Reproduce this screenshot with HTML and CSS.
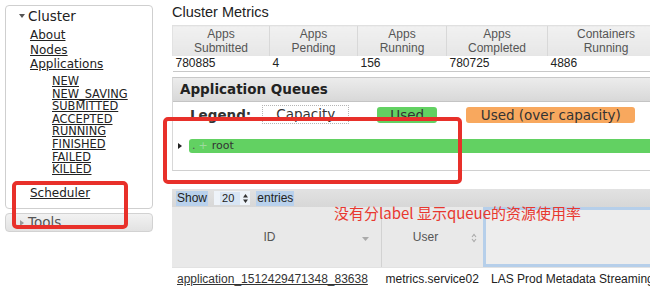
FILE: index.html
```html
<!DOCTYPE html>
<html>
<head>
<meta charset="utf-8">
<link rel="stylesheet" href="styles.css">
</head>
<body>
<div class="page">
  <aside class="nav">
    <div class="panel">
      <div class="panel-head"><span class="tri-down"></span>Cluster</div>
      <ul class="links">
        <li><a href="#">About</a></li>
        <li><a href="#">Nodes</a></li>
        <li><a href="#">Applications</a>
          <ul class="sub">
            <li><a href="#">NEW</a></li>
            <li><a href="#">NEW_SAVING</a></li>
            <li><a href="#">SUBMITTED</a></li>
            <li><a href="#">ACCEPTED</a></li>
            <li><a href="#">RUNNING</a></li>
            <li><a href="#">FINISHED</a></li>
            <li><a href="#">FAILED</a></li>
            <li><a href="#">KILLED</a></li>
          </ul>
        </li>
        <li class="sched"><a href="#">Scheduler</a></li>
      </ul>
    </div>
    <div class="panel-closed"><span class="tri-right"></span>Tools</div>
  </aside>

  <main class="content">
    <h3 class="title">Cluster Metrics</h3>
    <table class="metrics">
      <tr>
        <th class="c1">Apps<br>Submitted</th>
        <th class="c2">Apps<br>Pending</th>
        <th class="c3">Apps<br>Running</th>
        <th class="c4">Apps<br>Completed</th>
        <th class="c5">Containers<br>Running</th>
      </tr>
      <tr>
        <td>780885</td>
        <td>4</td>
        <td>156</td>
        <td>780725</td>
        <td>4886</td>
      </tr>
    </table>

    <section class="queues">
      <div class="q-head">Application Queues</div>
      <div class="legend">
        <span class="legend-label">Legend:</span>
        <span class="lg lg-cap">Capacity</span>
        <span class="lg lg-used">Used</span>
        <span class="lg lg-over">Used (over capacity)</span>
      </div>
      <div class="q-tree">
        <span class="tree-arrow"></span>
        <div class="q-bar"><span class="q-dot">.</span><span class="q-plus">+</span><span class="q-name">root</span></div>
      </div>
    </section>

    <div class="show-bar">
      <span class="sel">Show</span>
      <span class="select"><span class="sel-num">20</span><svg class="updown" width="5" height="9" viewBox="0 0 5 9"><path d="M2.5 0 L5 3.5 L0 3.5 Z M2.5 9 L5 5.5 L0 5.5 Z" fill="#333"/></svg></span>
      <span class="sel">entries</span>
    </div>

    <table class="apps">
      <tr>
        <th class="a1"><span class="th-id">ID</span><svg class="sort-down" width="7" height="4" viewBox="0 0 7 4"><path d="M0 0 L7 0 L3.5 4 Z" fill="#aaa"/></svg></th>
        <th class="a2"><span class="th-user">User</span><svg class="sort-both" width="6" height="10" viewBox="0 0 6 10"><path d="M1 4 L3 1.5 L5 4 M1 6 L3 8.5 L5 6" fill="none" stroke="#aaa" stroke-width="1.1"/></svg></th>
        <th class="a3"></th>
      </tr>
      <tr>
        <td class="app-id"><a href="#">application_1512429471348_83638</a></td>
        <td class="app-user">metrics.service02</td>
        <td class="app-name">LAS Prod Metadata Streaming</td>
      </tr>
    </table>
  </main>
</div>

<div class="mark mark-queue"></div>
<div class="mark mark-sched"></div>
<div class="note">没有分label 显示queue的资源使用率</div>
</body>
</html>
```

FILE: styles.css
```css
html, body {
  margin: 0;
  padding: 0;
}
body {
  width: 650px;
  height: 293px;
  overflow: hidden;
  position: relative;
  background: #fff;
  color: #222;
  font-family: "Liberation Sans", Arial, sans-serif;
}
.page {
  display: flex;
  align-items: flex-start;
}

/* ---------- left navigation ---------- */
.nav {
  flex: none;
  width: 148px;
  margin: 5px 0 0 5px;
  font-family: "DejaVu Sans", Verdana, sans-serif;
}
.panel {
  box-sizing: border-box;
  height: 204px;
  border: 1px solid #cfcfcf;
  border-radius: 4px;
  background: #fff;
}
.panel-head {
  height: 20px;
  line-height: 20px;
  padding-left: 13px;
  font-size: 13.5px;
  color: #222;
  display: flex;
  align-items: center;
}
.tri-down {
  width: 0;
  height: 0;
  border-left: 3px solid transparent;
  border-right: 3px solid transparent;
  border-top: 4px solid #555;
  margin-right: 3px;
}
.links {
  list-style: none;
  margin: 2px 0 0 0;
  padding: 0 0 0 24px;
  font-size: 12px;
  line-height: 14.5px;
}
.links a {
  color: #222;
  text-decoration: underline;
}
.sub {
  list-style: none;
  margin: 3.4px 0 0 0;
  padding: 0 0 0 22px;
  font-size: 11.4px;
  line-height: 12.64px;
}
.sched {
  margin-top: 10px;
}
.panel-closed {
  box-sizing: border-box;
  margin-top: 4px;
  height: 19px;
  border: 1px solid #d2d2d2;
  border-radius: 4px;
  background: linear-gradient(#f2f2f2, #e2e2e2);
  padding-left: 14px;
  font-size: 13.5px;
  line-height: 19px;
  color: #555;
  display: flex;
  align-items: center;
  overflow: hidden;
}
.tri-right {
  width: 0;
  height: 0;
  border-top: 3px solid transparent;
  border-bottom: 3px solid transparent;
  border-left: 4px solid #999;
  margin-right: 4px;
}

/* ---------- main content ---------- */
.content {
  flex: none;
  width: 520px;
  margin-left: 19px;
}
.title {
  margin: 0 0 4px 0;
  padding-top: 3px;
  font-size: 14.5px;
  line-height: 18px;
  font-weight: normal;
  color: #222;
}
.metrics {
  border-collapse: collapse;
  font-size: 12px;
  table-layout: fixed;
  width: 492px;
}
.metrics th {
  background: linear-gradient(#f1f1f1, #e6e6e6);
  color: #555;
  font-weight: normal;
  line-height: 14px;
  height: 30px;
  padding: 0;
  border-left: 1px solid #d8d8d8;
  border-top: 1px solid #e0e0e0;
}
.metrics th.c1 { width: 96px; border-left: 1px solid #e2e2e2; }
.metrics th.c2 { width: 87px; }
.metrics th.c3 { width: 88px; }
.metrics th.c4 { width: 100px; }
.metrics td {
  padding: 0 3px;
  height: 15px;
  line-height: 15px;
  border-bottom: 1px solid #c8c8c8;
  color: #222;
}

.queues {
  margin-top: 5px;
  font-family: "DejaVu Sans", Verdana, sans-serif;
  border-left: 1px solid #d8d8d8;
  border-top: 1px solid #c8c8c8;
  border-bottom: 1px solid #d0d0d0;
}
.q-head {
  height: 23px;
  line-height: 23px;
  padding-left: 7px;
  font-size: 13.5px;
  font-weight: bold;
  color: #222;
  background: linear-gradient(#ececec, #d8d8d8);
  border-bottom: 1px solid #c4c4c4;
}
.legend {
  height: 25px;
  display: flex;
  align-items: center;
  padding-left: 17px;
  font-size: 13.5px;
  color: #333;
}
.legend-label {
  font-weight: bold;
  margin-right: 11px;
}
.lg {
  box-sizing: border-box;
  height: 16px;
  line-height: 16px;
  text-align: center;
  border-radius: 3px;
}
.lg-cap {
  width: 87px;
  height: 19px;
  line-height: 17px;
  border: 1px dotted #b5b5b5;
  border-radius: 0;
}
.lg-used {
  width: 60px;
  margin-left: 28px;
  background: #62d162;
}
.lg-over {
  width: 169px;
  margin-left: 29px;
  background: #f8a85e;
}
.q-tree {
  height: 43px;
  display: flex;
  align-items: flex-start;
  padding-top: 12px;
  box-sizing: border-box;
}
.tree-arrow {
  width: 0;
  height: 0;
  border-top: 3px solid transparent;
  border-bottom: 3px solid transparent;
  border-left: 4px solid #222;
  margin: 4px 7px 0 5px;
}
.q-bar {
  flex: 1;
  height: 14px;
  line-height: 14px;
  background: #62d162;
  border-radius: 3px 0 0 3px;
  padding-left: 3px;
  font-size: 11px;
  color: #333;
}
.q-dot { color: #555; }
.q-plus { color: #9ed99e; margin-left: 3px; }
.q-name { margin-left: 4px; }

.show-bar {
  margin-top: 18px;
  height: 18px;
  display: flex;
  align-items: center;
  padding-left: 4px;
  background: linear-gradient(#e2e2e2, #d7d7d7);
  font-size: 12px;
  color: #222;
}
.sel {
  background: #b9d1ec;
  line-height: 15px;
  padding: 0 1px;
}
.select {
  display: flex;
  align-items: center;
  height: 14px;
  margin: 0 6px 0 6px;
  padding: 0 0 0 6px;
  background: #eef3f9;
  font-size: 11px;
}
.sel-num {
  background: #d8e5f4;
  padding: 0 6px 0 2px;
  line-height: 13px;
}
.updown {
  margin-left: 3px;
  margin-right: 2px;
}

.apps {
  border-collapse: collapse;
  table-layout: fixed;
  width: 520px;
  font-size: 12px;
}
.apps th {
  height: 60px;
  padding: 0;
  background: #e9e9e9;
  color: #555;
  font-weight: normal;
  position: relative;
  border-bottom: 1px solid #e2e2e2;
}
.apps th.a1 {
  width: 209px;
  border-right: 1px solid #d2d2d2;
}
.apps th.a2 {
  width: 101px;
}
.apps th.a3 {
  background: #ededed;
  box-shadow: inset 0 0 0 3px #b6cfea;
}
.th-id {
  margin-left: -14px;
}
.sort-down {
  position: absolute;
  right: 12px;
  top: 30px;
}
.th-user {
  margin-left: -14px;
}
.sort-both {
  position: absolute;
  right: 6px;
  top: 26px;
}
.apps td {
  padding: 4px 4px 0 4px;
  height: 20px;
  vertical-align: top;
  line-height: 14px;
  color: #222;
  white-space: nowrap;
  overflow: hidden;
}
.apps td.app-id {
  padding-left: 5px;
}
.apps td.app-id a {
  color: #333;
  text-decoration: underline;
}
.apps td.app-name {
  padding-left: 8px;
}

/* ---------- annotations ---------- */
.mark {
  position: absolute;
  box-sizing: border-box;
  border: 4.5px solid #e8302a;
  border-radius: 5px;
}
.mark-queue {
  left: 163px;
  top: 117px;
  width: 299px;
  height: 67px;
}
.mark-sched {
  left: 12px;
  top: 181px;
  width: 116px;
  height: 48px;
}
.note {
  position: absolute;
  left: 334px;
  top: 203px;
  font-family: "Noto Sans CJK SC", "Noto Sans", sans-serif;
  font-size: 15px;
  line-height: 20px;
  color: #e8382f;
  white-space: nowrap;
}
```
